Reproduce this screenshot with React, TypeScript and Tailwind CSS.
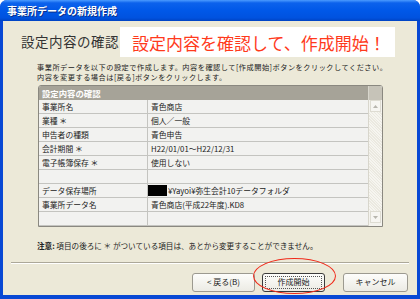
import React from "react";

const ROWS: { label: string; value: string; hidden?: boolean }[] = [
  { label: "事業所名", value: "青色商店" },
  { label: "業種 ＊", value: "個人／一般" },
  { label: "申告者の種類", value: "青色申告" },
  { label: "会計期間 ＊", value: "H22/01/01～H22/12/31" },
  { label: "電子帳簿保存 ＊", value: "使用しない" },
  { label: "", value: "" },
  { label: "データ保存場所", value: "¥Yayoi¥弥生会計10データフォルダ", hidden: true },
  { label: "事業所データ名", value: "青色商店(平成22年度).KD8" },
  { label: "", value: "" },
];

function XpButton({ label, primary }: { label: string; primary?: boolean }) {
  return (
    <div
      className={`h-[19px] rounded-[3px] flex items-center justify-center bg-gradient-to-b from-[#fdfdfb] to-[#ecebe4] text-[8px] text-[#222] ${
        primary ? "border border-[#3b3b3b] p-[2px]" : "border border-[#9c9a90]"
      }`}
    >
      {primary ? (
        <div className="w-full h-full border border-dotted border-[#555] flex items-center justify-center">
          {label}
        </div>
      ) : (
        label
      )}
    </div>
  );
}

export default function App() {
  return (
    <div className="w-[420px] h-[299px] flex flex-col bg-[#0848d4] rounded-t-[7px] overflow-hidden font-['Noto_Sans_CJK_JP',sans-serif]">
      {/* Title bar */}
      <div className="h-[21px] shrink-0 flex items-center pl-[7px] bg-[linear-gradient(to_bottom,#4b9bff_0%,#0c62ec_14%,#0058e8_50%,#0052df_85%,#0043c2_100%)]">
        <span className="text-white text-[10px] font-bold leading-none [text-shadow:1px_1px_0_#0a2f8a]">
          事業所データの新規作成
        </span>
      </div>

      {/* Body */}
      <div className="flex-1 mx-[3px] mb-[4px] bg-[#ece9d8] flex flex-col relative">
        {/* Header */}
        <div className="flex items-center mt-[6px] h-[30px]">
          <div className="w-[117px] pl-[18px] text-[13.5px] text-[#333] leading-none tracking-[0.5px]">
            設定内容の確認
          </div>
          <div className="w-[275px] h-[30px] bg-white flex items-center pl-[12px] text-[17px] text-[#ff3a1c] leading-none">
            設定内容を確認して、作成開始！
          </div>
        </div>

        {/* Description */}
        <div className="mt-[5px] pl-[34px] text-[7.2px] leading-[10px] tracking-[0.5px] text-[#222]">
          <div>事業所データを以下の設定で作成します。内容を確認して[作成開始]ボタンをクリックしてください。</div>
          <div>内容を変更する場合は[戻る]ボタンをクリックします。</div>
        </div>

        {/* Table */}
        <div className="ml-[35px] mt-[3px] w-[345px] h-[142px] border border-[#8a8880] rounded-t-[3px] flex bg-[#f2f2f0] overflow-hidden">
          <div className="flex-1 flex flex-col">
            <div className="h-[14px] bg-[#a6a398] flex items-center pl-[3px] text-white text-[8.4px] font-bold leading-none">
              設定内容の確認
            </div>
            {ROWS.map((r, i) => (
              <div key={i} className="h-[14px] flex border-b border-[#c4c4c0] text-[7.8px] text-[#222] leading-none">
                <div className="w-[109px] border-r border-[#c4c4c0] flex items-center pl-[3px]">{r.label}</div>
                <div className="flex-1 flex items-center">
                  {r.hidden && <span className="w-[19px] h-[11px] bg-black mr-[1px]" />}
                  <span className={r.hidden ? "" : "pl-[3px]"}>{r.value}</span>
                </div>
              </div>
            ))}
          </div>
          {/* Scrollbar */}
          <div className="w-[14px] flex flex-col bg-[#f4f3ee] border-l border-[#d8d6cc]">
            <div className="h-[14px] bg-[#c6c3b8]" />
            <div className="h-[12px] mx-[1px] bg-[#f7f6f2] border border-[#dedcd2] flex items-center justify-center">
              <svg width="5" height="3" viewBox="0 0 5 3">
                <path d="M0 3 L2.5 0 L5 3 Z" fill="#b8b6ae" />
              </svg>
            </div>
            <div className="flex-1 bg-[repeating-linear-gradient(45deg,#f6f5f0_0px,#f6f5f0_1px,#ebe9e0_1px,#ebe9e0_2px)]" />
            <div className="h-[12px] mx-[1px] mb-[3px] bg-[#f7f6f2] border border-[#dedcd2] flex items-center justify-center">
              <svg width="5" height="3" viewBox="0 0 5 3">
                <path d="M0 0 L2.5 3 L5 0 Z" fill="#b8b6ae" />
              </svg>
            </div>
          </div>
        </div>

        {/* Note */}
        <div className="mt-[15px] pl-[34px] text-[7.6px] leading-none text-[#222]">
          <span className="font-bold">注意:</span> 項目の後ろに ＊ がついている項目は、あとから変更することができません。
        </div>

        {/* Separator */}
        <div className="mt-[12px] mx-[8px] h-[2px] border-t border-[#aca899] border-b border-b-white" />

        {/* Buttons */}
        <div className="mt-[9px] flex pl-[189px]">
          <div className="w-[63px]">
            <XpButton label="< 戻る(B)" />
          </div>
          <div className="w-[63px] ml-[7px]">
            <XpButton label="作成開始" primary />
          </div>
          <div className="w-[65px] ml-[18px]">
            <XpButton label="キャンセル" />
          </div>
        </div>

        {/* Red annotation ellipse */}
        <div className="absolute left-[250px] top-[237px] w-[83px] h-[36px] rounded-[50%] border-[1.5px] border-[#f02a1a]" />
      </div>
    </div>
  );
}
